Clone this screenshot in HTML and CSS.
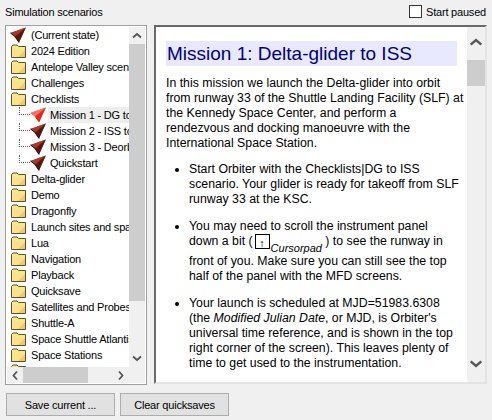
FILE: index.html
```html
<!DOCTYPE html>
<html lang="en">
<head>
<meta charset="UTF-8">
<title>Scenarios</title>
<link rel="stylesheet" href="styles.css">
</head>
<body>

<svg class="defs" width="0" height="0">
    <symbol id="glider" viewBox="0 0 16 16">
        <path d="M15.8 0.5 L0.5 6 L5 9.5 L9 15.5 Z" fill="#8a2416"/>
        <path d="M15.8 0.5 L5 9.5 L9 15.5 Z" fill="#5a1610"/>
        <path d="M15.8 0.5 L0.5 6 L5 9.5 Z" fill="#a83a28"/>
        <path d="M0.5 6 L5 9.5 L9 15.5" fill="none" stroke="#2a0c08"/>
    </symbol>
    <symbol id="glider-on" viewBox="0 0 16 16">
        <path d="M15.8 0.5 L0.5 6 L5 9.5 L9 15.5 Z" fill="#f23a2a"/>
        <path d="M15.8 0.5 L5 9.5 L9 15.5 Z" fill="#e02c20"/>
        <path d="M15.8 0.5 L0.5 6 L5 9.5 Z" fill="#ff7060"/>
    </symbol>
    <symbol id="folder" viewBox="0 0 16 16">
        <path d="M1.5 14.5 V3.5 L3 2 H7 L8.5 3.5 H15.5 V14.5 Z" fill="#fbe88e" stroke="#5a5218"/>
        <path d="M3 5.5 H15 V14 H3 Z" fill="#f9e48c"/>
        <path d="M8 14 L15 14 L15 7 Z" fill="#f2c878"/>
    </symbol>
</svg>

<div class="top">
    <span>Simulation scenarios</span>
    <label class="check"><span class="box"></span>Start paused</label>
</div>

<div class="main">
    <div class="tree">
        <div class="tree-view">
            <div class="tree-list">
                <div class="row"><svg class="ico"><use href="#glider"/></svg><span>(Current state)</span></div>
                <div class="row"><svg class="ico"><use href="#folder"/></svg><span>2024 Edition</span></div>
                <div class="row"><svg class="ico"><use href="#folder"/></svg><span>Antelope Valley scenarios</span></div>
                <div class="row"><svg class="ico"><use href="#folder"/></svg><span>Challenges</span></div>
                <div class="row"><svg class="ico"><use href="#folder"/></svg><span>Checklists</span></div>
                <div class="row sub"><i class="dots"></i><svg class="ico"><use href="#glider-on"/></svg><span class="sel">Mission 1 - DG to ISS</span></div>
                <div class="row sub"><i class="dots"></i><svg class="ico"><use href="#glider"/></svg><span>Mission 2 - ISS to Mir</span></div>
                <div class="row sub"><i class="dots"></i><svg class="ico"><use href="#glider"/></svg><span>Mission 3 - Deorbit</span></div>
                <div class="row sub"><i class="dots"></i><svg class="ico"><use href="#glider"/></svg><span>Quickstart</span></div>
                <div class="row"><svg class="ico"><use href="#folder"/></svg><span>Delta-glider</span></div>
                <div class="row"><svg class="ico"><use href="#folder"/></svg><span>Demo</span></div>
                <div class="row"><svg class="ico"><use href="#folder"/></svg><span>Dragonfly</span></div>
                <div class="row"><svg class="ico"><use href="#folder"/></svg><span>Launch sites and spaceports</span></div>
                <div class="row"><svg class="ico"><use href="#folder"/></svg><span>Lua</span></div>
                <div class="row"><svg class="ico"><use href="#folder"/></svg><span>Navigation</span></div>
                <div class="row"><svg class="ico"><use href="#folder"/></svg><span>Playback</span></div>
                <div class="row"><svg class="ico"><use href="#folder"/></svg><span>Quicksave</span></div>
                <div class="row"><svg class="ico"><use href="#folder"/></svg><span>Satellites and Probes</span></div>
                <div class="row"><svg class="ico"><use href="#folder"/></svg><span>Shuttle-A</span></div>
                <div class="row"><svg class="ico"><use href="#folder"/></svg><span>Space Shuttle Atlantis</span></div>
                <div class="row"><svg class="ico"><use href="#folder"/></svg><span>Space Stations</span></div>
                <div class="row"><svg class="ico"><use href="#folder"/></svg><span>Tests</span></div>
            </div>
            <div class="vbar">
                <svg class="arrow" viewBox="0 0 10 6"><path d="M1 5 L5 1.5 L9 5" /></svg>
                <div class="track"><div class="thumb tree-thumb"></div></div>
                <svg class="arrow" viewBox="0 0 10 6"><path d="M1 1 L5 4.5 L9 1" /></svg>
            </div>
        </div>
        <div class="hbar">
            <svg class="arrow" viewBox="0 0 6 10"><path d="M5 1 L1.5 5 L5 9" /></svg>
            <div class="htrack"><div class="hthumb"></div></div>
            <svg class="arrow" viewBox="0 0 6 10"><path d="M1 1 L4.5 5 L1 9" /></svg>
            <div class="corner"></div>
        </div>
    </div>

    <div class="doc">
        <div class="doc-text">
            <h1>Mission 1: Delta-glider to ISS</h1>
            <p>In this mission we launch the Delta-glider into orbit<br>from runway 33 of the Shuttle Landing Facility (SLF) at<br>the Kennedy Space Center, and perform a<br>rendezvous and docking manoeuvre with the<br>International Space Station.</p>
            <ul>
                <li>Start Orbiter with the Checklists|DG to ISS<br>scenario. Your glider is ready for takeoff from SLF<br>runway 33 at the KSC.</li>
                <li>You may need to scroll the instrument panel<br>down a bit (<span class="key">↑</span><sub>Cursorpad</sub> ) to see the runway in<br>front of you. Make sure you can still see the top<br>half of the panel with the MFD screens.</li>
                <li>Your launch is scheduled at MJD=51983.6308<br>(the <em>Modified Julian Date</em>, or MJD, is Orbiter's<br>universal time reference, and is shown in the top<br>right corner of the screen). This leaves plenty of<br>time to get used to the instrumentation.</li>
            </ul>
        </div>
        <div class="vbar doc-bar">
            <svg class="arrow" viewBox="0 0 10 6"><path d="M1 5 L5 1.5 L9 5" /></svg>
            <div class="track"><div class="thumb doc-thumb"></div></div>
            <svg class="arrow" viewBox="0 0 10 6"><path d="M1 1 L5 4.5 L9 1" /></svg>
        </div>
    </div>
</div>

<div class="buttons">
    <button type="button">Save current ...</button>
    <button type="button">Clear quicksaves</button>
</div>

</body>
</html>
```

FILE: styles.css
```css
html, body {
    height: 100%;
}

body {
    margin: 0;
    background-color: #f0f0f0;
    color: #000;
    font-family: "Liberation Sans", Arial, sans-serif;
    font-size: 11px;
    letter-spacing: -0.2px;
    overflow: hidden;
}

.defs {
    display: block;
    height: 0;
}

.top {
    display: flex;
    justify-content: space-between;
    align-items: center;
    height: 25px;
    padding: 0 6px 2px 5px;
    box-sizing: border-box;
}

.check {
    display: flex;
    align-items: center;
    gap: 4px;
}

.box {
    width: 11px;
    height: 11px;
    background-color: #fff;
    border: 1px solid #333;
}

.main {
    display: flex;
    gap: 7px;
    padding: 0 5px 0 5px;
    height: 360px;
}

.tree {
    width: 142px;
    flex: none;
    box-sizing: border-box;
    border: 1px solid #a0a0a0;
    background-color: #fff;
    padding: 1px;
    display: flex;
    flex-direction: column;
}

.tree-view {
    flex: 1;
    min-height: 0;
    display: flex;
}

.tree-list {
    flex: 1;
    min-width: 0;
    overflow: hidden;
    padding: 0 0 0 3px;
}

.row {
    display: flex;
    align-items: center;
    height: 16px;
    white-space: nowrap;
}

.row span {
    padding: 0 2px;
    margin-left: 3px;
    line-height: 16px;
}

.row.sub {
    padding-left: 9px;
}

.row.sub span {
    margin-left: 2px;
}

.row .sel {
    background-color: #eee;
    flex: 1;
}

.dots {
    flex: none;
    align-self: flex-start;
    width: 11px;
    height: 8px;
    border-left: 1px dotted #666;
    border-bottom: 1px dotted #666;
    box-sizing: border-box;
}

.ico {
    width: 16px;
    height: 16px;
    flex: none;
}

.vbar {
    width: 16px;
    flex: none;
    display: flex;
    flex-direction: column;
    background-color: #f0f0f0;
}

.arrow {
    flex: none;
    width: 16px;
    height: 17px;
    padding: 5px 3px;
    box-sizing: border-box;
}

.arrow path {
    fill: none;
    stroke: #555;
    stroke-width: 1.8;
}

.track {
    flex: 1;
}

.thumb {
    background-color: #cdcdcd;
}

.tree-thumb {
    height: 257px;
}

.doc-bar {
    width: 18px;
}

.doc-bar .arrow {
    width: 18px;
    height: 33px;
    padding: 11px 2px 14px 2px;
}

.doc-thumb {
    height: 26px;
}

.hbar {
    height: 16px;
    flex: none;
    display: flex;
    background-color: #f0f0f0;
}

.hbar .arrow {
    padding: 3px 5px;
}

.htrack {
    flex: 1;
}

.hthumb {
    width: 65px;
    height: 100%;
    background-color: #cdcdcd;
}

.corner {
    width: 16px;
    flex: none;
}

.doc {
    flex: 1;
    min-width: 0;
    box-sizing: border-box;
    height: 359px;
    border: 2px solid;
    border-color: #696969 #e3e3e3 #e3e3e3 #696969;
    background-color: #fff;
    display: flex;
}

.doc-text {
    flex: 1;
    min-width: 0;
    overflow: hidden;
    padding: 14px 10px 0 10px;
    font-size: 12.3px;
    letter-spacing: 0;
    line-height: 15px;
    white-space: nowrap;
}

.doc-text h1 {
    margin: 0 0 10px 0;
    padding: 0 0 0 1px;
    background-color: #e8e8ff;
    color: #000080;
    font-size: 19px;
    font-weight: normal;
    line-height: 25px;
}

.doc-text p {
    margin: 0 0 11px 0;
}

.doc-text ul {
    margin: 0;
    padding-left: 23px;
}

.doc-text li {
    margin-bottom: 12px;
}

.key {
    display: inline-block;
    width: 13px;
    height: 13px;
    margin: 0 1px 5px 2px;
    border: 1px solid #000;
    font-size: 11px;
    line-height: 16px;
    text-align: center;
    vertical-align: -2px;
}

sub {
    font-style: italic;
    font-size: 11px;
    line-height: 0;
    vertical-align: -7px;
}

.buttons {
    display: flex;
    gap: 5px;
    padding: 8px 0 0 6px;
}

button {
    width: 109px;
    height: 23px;
    padding: 0;
    background-color: #e1e1e1;
    border: 1px solid #adadad;
    font-family: inherit;
    font-size: inherit;
    letter-spacing: inherit;
    color: #000;
}
```
